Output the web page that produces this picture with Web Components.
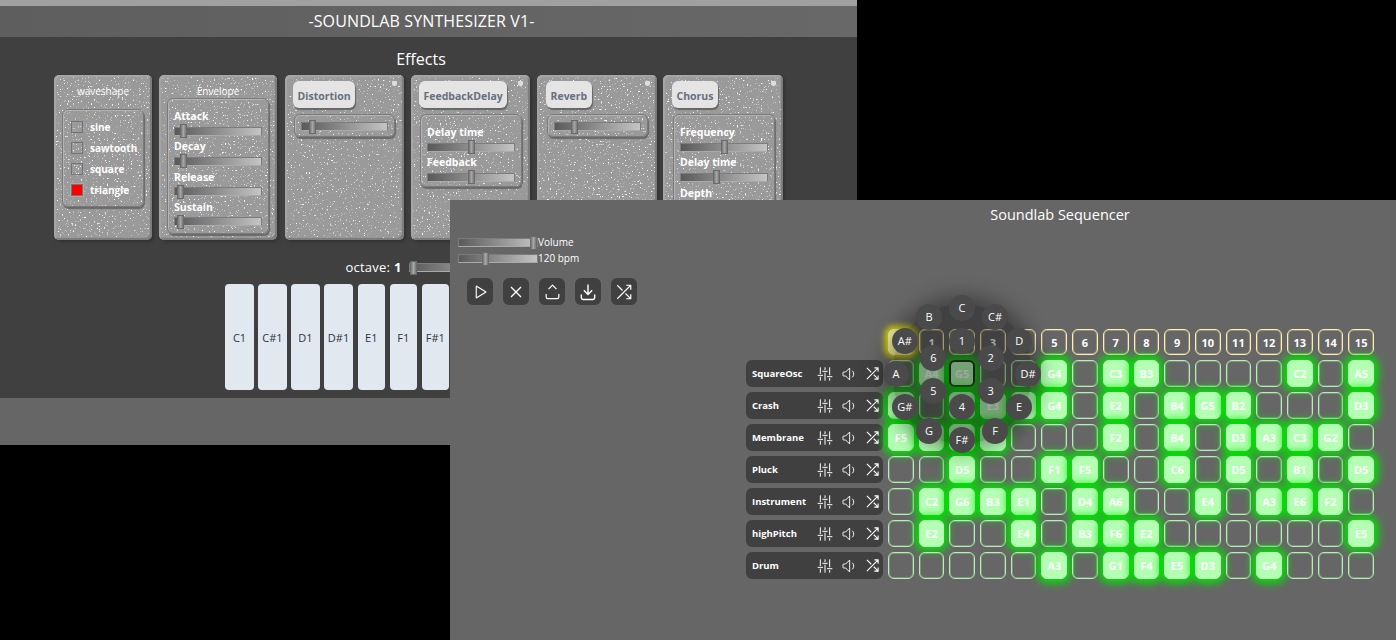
<!DOCTYPE html>
<html>
<head>
<meta charset="utf-8">
<title>Soundlab</title>
<style>
    html, body { margin: 0; height: 640px; background: #000; overflow: hidden; font-family: "Open Sans", "Noto Sans", sans-serif; color: #fff; }
</style>
</head>
<body>
<lab-desk></lab-desk>
<script>
const ICONS = {
    play: '<path d="M7 4v16l13-8z"/>',
    close: '<path d="M18 6L6 18M6 6l12 12"/>',
    upload: '<path d="M4 15v4a2 2 0 0 0 2 2h12a2 2 0 0 0 2-2v-4M7 9l5-5 5 5"/>',
    download: '<path d="M4 15v4a2 2 0 0 0 2 2h12a2 2 0 0 0 2-2v-4M7 10l5 5 5-5M12 3v12"/>',
    shuffle: '<path d="M15 3h6v6M21 3L3 21M15 21h6v-6M3 3l7 7M14 14l7 7"/>',
    mixer: '<path d="M5 2v10M5 16v6M12 2v4M12 10v12M19 2v12M19 18v4M1 14h8M8 8h8M15 16h8"/>',
    volume: '<path d="M7 15H4a1 1 0 0 1-1-1v-4a1 1 0 0 1 1-1h3l6-6v18zM17 7a7 7 0 0 1 0 10"/>'
};

function icon(name, size, width) {
    return `<svg width="${size}" height="${size}" viewBox="0 0 24 24" fill="none" stroke="#fff" stroke-width="${width}" stroke-linejoin="round">${ICONS[name]}</svg>`;
}

class LabSlider extends HTMLElement {
    connectedCallback() {
        const value = this.getAttribute('value') || 0;
        this.attachShadow({ mode: 'open' });
        this.shadowRoot.innerHTML = `
            <style>
                :host { display: block; height: 14px; }
                input {
                    -webkit-appearance: none;
                    appearance: none;
                    display: block;
                    box-sizing: border-box;
                    width: 100%;
                    height: 9px;
                    margin: 3px 0 0;
                    background: linear-gradient(90deg, #5a5a5a, #c4c4c4);
                    border: 1px solid #7c7c7c;
                    border-bottom-color: #aaa;
                    outline: none;
                }
                input::-webkit-slider-thumb {
                    -webkit-appearance: none;
                    width: 7px;
                    height: 14px;
                    margin-top: 0;
                    background: linear-gradient(90deg, #777, #a6a6a6 50%, #777);
                    border: 1px solid #6a6a6a;
                    box-sizing: border-box;
                }
            </style>
            <input type="range" min="0" max="100" value="${value}">
        `;
    }
}

class ParamGroup extends HTMLElement {
    connectedCallback() {
        this.attachShadow({ mode: 'open' });
        this.shadowRoot.innerHTML = `
            <style>
                :host {
                    display: flex;
                    flex-direction: column;
                    box-sizing: border-box;
                    border: 1px solid #7a7a7a;
                    border-radius: 6px;
                    box-shadow: 1px 2px 1px #6a6a6a, inset 1px 1px 0 #b4b4b4;
                    padding: 6px;
                    gap: .65px;
                }
            </style>
            <slot></slot>
        `;
    }
}

class ParamLabel extends HTMLElement {
    connectedCallback() {
        this.attachShadow({ mode: 'open' });
        this.shadowRoot.innerHTML = `
            <style>
                :host { display: block; height: 15px; line-height: 17px; font-size: 10.5px; font-weight: 700; color: #fff; white-space: nowrap; }
            </style>
            <slot></slot>
        `;
    }
}

class WaveOption extends HTMLElement {
    connectedCallback() {
        const on = this.hasAttribute('checked');
        this.attachShadow({ mode: 'open' });
        this.shadowRoot.innerHTML = `
            <style>
                :host { display: flex; align-items: center; gap: 7px; height: 21px; font-size: 10px; font-weight: 700; white-space: nowrap; }
                .box { box-sizing: border-box; width: 12px; height: 12px; border: 1px solid #747474; background: ${on ? '#f00' : 'transparent'}; outline: ${on ? '1px solid #aaa' : 'none'}; }
            </style>
            <span class="box"></span><span><slot></slot></span>
        `;
    }
}

class EffectCard extends HTMLElement {
    connectedCallback() {
        const chip = this.getAttribute('chip');
        const heading = this.getAttribute('heading');
        const seed = this.getAttribute('seed') || 1;
        this.attachShadow({ mode: 'open' });
        this.shadowRoot.innerHTML = `
            <style>
                :host {
                    display: block;
                    flex: none;
                    position: relative;
                    box-sizing: border-box;
                    height: 165px;
                    background: #9a9a9a;
                    border-radius: 5px;
                    box-shadow: 2px 2px 3px #333;
                    overflow: hidden;
                }
                .speckle { position: absolute; inset: 0; width: 100%; height: 100%; }
                .bevel { position: absolute; inset: 0; border-radius: 5px; box-shadow: inset 2px 2px 1px #a6a6a6, inset -2px -2px 1px #7c7c7c; }
                .body { position: relative; display: flex; flex-direction: column; height: 100%; box-sizing: border-box; padding: 6px 8px 0 var(--pad, 8px); }
                .heading { text-align: center; font-size: 10px; line-height: 20px; height: 20px; }
                .chip {
                    align-self: flex-start;
                    box-sizing: border-box;
                    height: 27px;
                    line-height: 30px;
                    padding: 0 4.5px;
                    margin-bottom: 6px;
                    background: #e4e4e4;
                    border-radius: 6px;
                    color: #68707c;
                    font-size: 10.5px;
                    font-weight: 700;
                    box-shadow: 1px 2px 1px #666;
                }
                .dot { position: absolute; top: 6px; right: 7px; width: 5px; height: 5px; border-radius: 1px 1px 50% 50%; background: #ddd; }
            </style>
            <svg class="speckle">
                <filter id="n" x="0" y="0" width="100%" height="100%" color-interpolation-filters="sRGB">
                    <feTurbulence type="fractalNoise" baseFrequency="0.62" numOctaves="2" seed="${seed}"/>
                    <feColorMatrix type="matrix" values="0 0 0 0 1  0 0 0 0 1  0 0 0 0 1  7 0 0 0 -4.55"/>
                </filter>
                <rect width="100%" height="100%" filter="url(#n)"/>
            </svg>
            <div class="bevel"></div>
            <div class="body">
                ${heading ? `<div class="heading">${heading}</div>` : ''}
                ${chip ? `<div class="chip">${chip}</div><div class="dot"></div>` : ''}
                <slot></slot>
            </div>
        `;
    }
}

class SynthWindow extends HTMLElement {
    connectedCallback() {
        const keys = ['C1', 'C#1', 'D1', 'D#1', 'E1', 'F1', 'F#1', 'G1', 'G#1', 'A1', 'A#1', 'B1'];
        this.attachShadow({ mode: 'open' });
        this.shadowRoot.innerHTML = `
            <style>
                :host { display: flex; flex-direction: column; position: absolute; left: 0; top: 0; width: 857px; height: 445px; background: #666; }
                .strip { height: 6px; background: #a0a0a0; }
                header { height: 31px; line-height: 31px; padding-right: 14px; text-align: center; font-size: 16px; letter-spacing: .12px; background: linear-gradient(90deg, #5e5e5e, #686868); }
                main { height: 361px; box-sizing: border-box; background: #404040; display: flex; flex-direction: column; }
                .fx { width: 734px; margin-left: 54px; }
                h2 { margin: 0; height: 38px; line-height: 44px; text-align: center; font-size: 16px; font-weight: 400; }
                .cards { display: flex; gap: 7px; }
                .octave { display: flex; align-items: center; justify-content: center; gap: 7px; height: 30px; margin: 12px 0 0 -1px; font-size: 13px; letter-spacing: .25px; }
                .octave b { font-weight: 700; }
                .octave lab-slider { width: 102px; }
                .keys { display: flex; justify-content: center; gap: 4px; margin: 2px 18px 0 0; }
                .key { flex: none; width: 29px; height: 106px; display: flex; align-items: center; justify-content: center; background: #e2e8f0; border-radius: 4px; color: #2a3340; font-size: 11px; }
                .key.nar { width: 27.5px; margin-left: .5px; }
            </style>
            <div class="strip"></div>
            <header>-SOUNDLAB SYNTHESIZER V1-</header>
            <main>
                <div class="fx">
                    <h2>Effects</h2>
                    <div class="cards">
                        <effect-card style="width:98px" heading="waveshape" seed="3">
                            <param-group style="margin:8px 0 0;padding:7px 0 6px 8px;height:98px;gap:0">
                                <wave-option>sine</wave-option>
                                <wave-option>sawtooth</wave-option>
                                <wave-option>square</wave-option>
                                <wave-option checked>triangle</wave-option>
                            </param-group>
                        </effect-card>
                        <effect-card style="width:118px" heading="Envelope" seed="5">
                            <param-group style="margin:-3px 0 0;height:136px;padding:9px 6px 0">
                                <param-label>Attack</param-label><lab-slider value="6"></lab-slider>
                                <param-label>Decay</param-label><lab-slider value="6"></lab-slider>
                                <param-label>Release</param-label><lab-slider value="3"></lab-slider>
                                <param-label>Sustain</param-label><lab-slider value="3"></lab-slider>
                            </param-group>
                        </effect-card>
                        <effect-card style="width:119px;margin-left:1px" chip="Distortion" seed="7">
                            <param-group style="height:23px;width:101px;margin-left:1px;padding:4px 6px 0"><lab-slider value="9"></lab-slider></param-group>
                        </effect-card>
                        <effect-card style="width:119px" chip="FeedbackDelay" seed="9">
                            <param-group style="height:73px;width:102px;margin-left:1px;padding:9px 6px 0">
                                <param-label>Delay time</param-label><lab-slider value="50"></lab-slider>
                                <param-label>Feedback</param-label><lab-slider value="50"></lab-slider>
                            </param-group>
                        </effect-card>
                        <effect-card style="width:120px;--pad:9px" chip="Reverb" seed="11">
                            <param-group style="height:23px;width:101px;margin-left:1px;padding:4px 6px 0"><lab-slider value="20"></lab-slider></param-group>
                        </effect-card>
                        <effect-card style="width:120px;margin-left:-1px;--pad:9px" chip="Chorus" seed="13">
                            <param-group style="height:120px;width:102px;margin-left:1px;padding:9px 6px 0">
                                <param-label>Frequency</param-label><lab-slider value="50"></lab-slider>
                                <param-label>Delay time</param-label><lab-slider value="41"></lab-slider>
                                <param-label>Depth</param-label><lab-slider value="50"></lab-slider>
                            </param-group>
                        </effect-card>
                    </div>
                </div>
                <div class="octave"><span>octave: <b>1</b></span><lab-slider value="0"></lab-slider></div>
                <div class="keys">
                    ${keys.map(k => `<div class="key ${k[0] === 'E' || k[0] === 'F' ? 'nar' : ''}">${k}</div>`).join('')}
                </div>
            </main>
        `;
    }
}

class SeqCell extends HTMLElement {
    connectedCallback() {
        this.attachShadow({ mode: 'open' });
        this.shadowRoot.innerHTML = `
            <style>
                :host {
                    display: flex;
                    align-items: center;
                    justify-content: center;
                    box-sizing: border-box;
                    border: 1px solid #b4f0b4;
                    box-shadow: inset 0 0 0 1px rgba(180,240,180,.3);
                    border-radius: 6px;
                    font-size: 11px;
                    font-weight: 700;
                    color: #fff;
                }
                :host([on]) { background: #b4ffb4; border-color: #b4ffb4; box-shadow: 0 0 8px 4px #00e600; }
                :host([head]) { border-color: #fff0b0; box-shadow: inset 0 0 0 1px rgba(255,240,176,.3); }
                :host([active]) { background: #f2efa0; border-color: #f2efa0; box-shadow: 0 0 6px 3px #e6e600; }
                :host([selected]) { border: 2px solid #333; }
            </style>
            <slot></slot>
        `;
    }
}

class TrackLabel extends HTMLElement {
    connectedCallback() {
        this.attachShadow({ mode: 'open' });
        this.shadowRoot.innerHTML = `
            <style>
                :host {
                    display: flex;
                    align-items: center;
                    box-sizing: border-box;
                    padding: 0 3px 0 6px;
                    background: #404040;
                    border-radius: 6px;
                    font-size: 9.5px;
                    font-weight: 700;
                }
                span { flex: 1; white-space: nowrap; }
                svg { display: block; margin-left: 8px; }
            </style>
            <span><slot></slot></span>
            ${icon('mixer', 16, 1.5)}${icon('volume', 16, 1.4)}${icon('shuffle', 15, 1.7)}
        `;
    }
}

class PieMenu extends HTMLElement {
    connectedCallback() {
        const notes = ['C', 'C#', 'D', 'D#', 'E', 'F', 'F#', 'G', 'G#', 'A', 'A#', 'B'];
        const octaves = ['1', '2', '3', '4', '5', '6'];
        const place = (label, i, count, r) => {
            const a = i / count * Math.PI * 2;
            return `<div class="b" style="left:${100 + r * Math.sin(a) - 13}px;top:${100 - r * Math.cos(a) - 13}px">${label}</div>`;
        };
        this.attachShadow({ mode: 'open' });
        this.shadowRoot.innerHTML = `
            <style>
                :host { display: block; position: absolute; left: -26px; top: -55px; width: 200px; height: 200px; }
                .shade { position: absolute; inset: 30px; border-radius: 50%; background: rgba(0,0,0,.36); box-shadow: 0 0 20px 8px rgba(0,0,0,.36); }
                .b { position: absolute; width: 26px; height: 26px; border-radius: 50%; background: #4a4a4a; line-height: 26px; text-align: center; font-size: 11px; color: #fff; }
            </style>
            <div class="shade"></div>
            ${notes.map((n, i) => place(n, i, 12, 66)).join('')}
            ${octaves.map((n, i) => place(n, i, 6, 33)).join('')}
        `;
    }
}

class SeqWindow extends HTMLElement {
    connectedCallback() {
        const heads = Array.from({ length: 16 }, (_, i) => i);
        const tracks = [
            ['SquareOsc', ['', 'A4', 'G5', '', '', 'G4', '', 'C3', 'B3', '', '', '', '', 'C2', '', 'A5']],
            ['Crash', ['*', '', '*', 'E3', '*', 'G4', '', 'E2', '', 'B4', 'G5', 'B2', '', '', '', 'D3']],
            ['Membrane', ['F5', '*', '*', '*', '', '', '', 'F2', '', 'B4', '', 'D3', 'A3', 'C3', 'G2', '']],
            ['Pluck', ['', '', 'D5', '', '', 'F1', 'F5', '', '', 'C6', '', 'D5', '', 'B1', '', 'D5']],
            ['Instrument', ['', 'C2', 'G6', 'B3', 'E1', '', 'D4', 'A6', '', '', 'E4', '', 'A3', 'E6', 'F2', '']],
            ['highPitch', ['', 'E2', '', '', 'E4', '', 'B3', 'F6', 'E2', '', '', '', '', '', '', 'E5']],
            ['Drum', ['', '', '', '', '', 'A3', '', 'G1', 'F4', 'E5', 'D3', '', 'G4', '', '', '']]
        ];
        const cell = (note, col) => {
            const sel = note === 'G5' && col === 2 ? ' selected' : '';
            return `<seq-cell${note ? ' on' : ''}${sel}>${note === '*' ? '' : note}</seq-cell>`;
        };
        this.attachShadow({ mode: 'open' });
        this.shadowRoot.innerHTML = `
            <style>
                :host { display: flex; justify-content: space-between; position: absolute; left: 450px; top: 200px; width: 946px; height: 440px; background: #666; }
                .left { padding: 34px 0 0 8px; }
                .row { display: flex; align-items: center; height: 16px; font-size: 10px; white-space: nowrap; }
                .tools { display: flex; gap: 10px; margin: 12px 0 0 9px; }
                .tool { display: flex; align-items: center; justify-content: center; width: 26px; height: 27px; background: #404040; border-radius: 6px; }
                .seq { width: 628px; margin-right: 22px; }
                h1 { margin: 0; height: 129px; box-sizing: border-box; padding-top: 5px; line-height: 20px; text-align: center; font-size: 14.5px; font-weight: 400; }
                .table { display: grid; grid-template-columns: 137px 1fr; column-gap: 5px; }
                .names { display: grid; grid-template-rows: 26px repeat(7, 27px); row-gap: 5px; }
                .grid { position: relative; display: grid; grid-template-columns: repeat(16, 1fr); grid-template-rows: 26px repeat(7, 27px); gap: 5px; }
            </style>
            <div class="left">
                <div class="row"><lab-slider value="100" style="width:80px"></lab-slider>Volume</div>
                <div class="row"><lab-slider value="33" style="width:80px"></lab-slider>120 bpm</div>
                <div class="tools">
                    <div class="tool">${icon('play', 18, 1.5)}</div>
                    <div class="tool">${icon('close', 20, 1.6)}</div>
                    <div class="tool">${icon('upload', 19, 1.5)}</div>
                    <div class="tool">${icon('download', 20, 1.7)}</div>
                    <div class="tool">${icon('shuffle', 18, 1.6)}</div>
                </div>
            </div>
            <div class="seq">
                <h1>Soundlab Sequencer</h1>
                <div class="table">
                    <div class="names">
                        <div></div>
                        ${tracks.map(t => `<track-label>${t[0]}</track-label>`).join('')}
                    </div>
                    <div class="grid">
                        ${heads.map(h => `<seq-cell head ${h === 0 ? 'active' : ''}>${h === 0 ? '' : h}</seq-cell>`).join('')}
                        ${tracks.map(t => t[1].map(cell).join('')).join('')}
                        <pie-menu></pie-menu>
                    </div>
                </div>
            </div>
        `;
    }
}

class LabDesk extends HTMLElement {
    connectedCallback() {
        this.attachShadow({ mode: 'open' });
        this.shadowRoot.innerHTML = `
            <style>
                :host { display: block; position: relative; width: 1396px; height: 640px; }
            </style>
            <synth-window></synth-window>
            <seq-window></seq-window>
        `;
    }
}

customElements.define('lab-slider', LabSlider);
customElements.define('param-group', ParamGroup);
customElements.define('param-label', ParamLabel);
customElements.define('wave-option', WaveOption);
customElements.define('effect-card', EffectCard);
customElements.define('synth-window', SynthWindow);
customElements.define('seq-cell', SeqCell);
customElements.define('track-label', TrackLabel);
customElements.define('pie-menu', PieMenu);
customElements.define('seq-window', SeqWindow);
customElements.define('lab-desk', LabDesk);
</script>
</body>
</html>
